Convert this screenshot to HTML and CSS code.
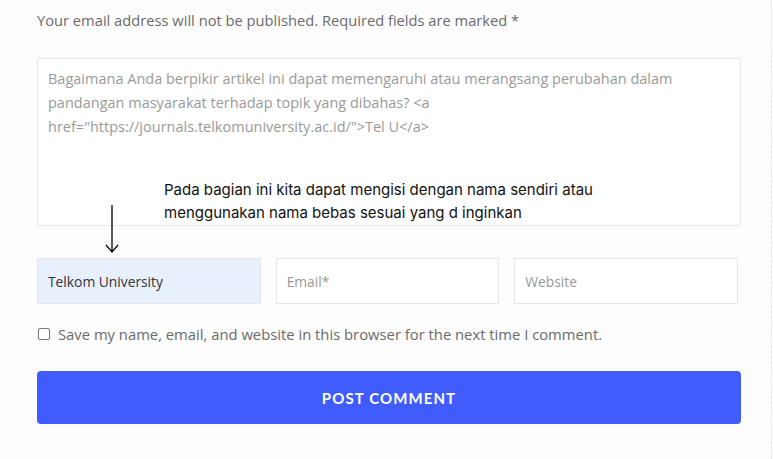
FILE: index.html
```html
<!DOCTYPE html>
<html lang="id">
<head>
<meta charset="utf-8">
<title>Tinggalkan Komentar</title>
<link rel="stylesheet" href="styles.css">
</head>
<body>
<div class="page">
  <form class="comment-form">
    <p class="notes">Your email address will not be published. Required fields are marked *</p>

    <div class="comment-field">
      <div class="textarea">Bagaimana Anda berpikir artikel ini dapat memengaruhi atau merangsang perubahan dalam pandangan masyarakat terhadap topik yang dibahas? &lt;a href="https://journals.telkomuniversity.ac.id/"&gt;Tel U&lt;/a&gt;</div>
      <p class="callout">Pada bagian ini kita dapat mengisi dengan nama sendiri atau menggunakan nama bebas sesuai yang d inginkan</p>
      <svg class="pointer" width="16" height="50" viewBox="0 0 16 50" aria-hidden="true">
        <path d="M8 1 V48 M2 41 L8 48 L14 41" fill="none" stroke="#111" stroke-width="1.4"/>
      </svg>
    </div>

    <div class="fields">
      <div class="input filled">Telkom University</div>
      <div class="input">Email*</div>
      <div class="input">Website</div>
    </div>

    <label class="consent">
      <span class="box"></span>
      <span>Save my name, email, and website in this browser for the next time I comment.</span>
    </label>

    <button type="button" class="submit">POST COMMENT</button>
  </form>
</div>
</body>
</html>
```

FILE: styles.css
```css
* {
  box-sizing: border-box;
}

html, body {
  margin: 0;
  padding: 0;
  background: #fdfdfd;
}

body {
  font-family: "Open Sans", "Lato", sans-serif;
  color: #666;
}

.page {
  width: 772px;
  height: 459px;
  border-right: 1px dashed #e6e6e6;
  padding: 10px 0 0 37px;
  overflow: hidden;
}

.comment-form {
  width: 704px;
}

.notes {
  margin: 0;
  font-size: 14.7px;
  line-height: 20px;
  color: #6b6b6b;
}

.comment-field {
  position: relative;
  margin-top: 28px;
}

.textarea {
  height: 168px;
  border: 1px solid #e6e6e6;
  border-radius: 3px;
  background: #fff;
  padding: 8px 30px 0 10px;
  font-size: 14.5px;
  line-height: 24px;
  color: #9a9a9a;
}

.callout {
  position: absolute;
  left: 127px;
  top: 120px;
  margin: 0;
  width: 450px;
  font-family: "Inter", sans-serif;
  font-size: 15px;
  line-height: 23px;
  color: #111;
}

.pointer {
  position: absolute;
  left: 67px;
  top: 146px;
}

.fields {
  display: flex;
  gap: 15px;
  margin-top: 32px;
  width: 701px;
}

.input {
  flex: 1;
  height: 46px;
  border: 1px solid #e6e6e6;
  background: #fff;
  display: flex;
  align-items: center;
  padding-left: 10px;
  font-size: 13.8px;
  color: #999;
}

.input.filled {
  background: #e8f0fd;
  color: #333;
}

.consent {
  display: flex;
  align-items: center;
  gap: 8px;
  margin-top: 20px;
  font-size: 14.8px;
  line-height: 20px;
  color: #6b6b6b;
}

.box {
  width: 12px;
  height: 12px;
  margin-left: 1px;
  border: 1px solid #777;
  border-radius: 2px;
  background: #fff;
}

.submit {
  display: block;
  width: 704px;
  height: 53px;
  margin-top: 27px;
  border: 0;
  border-radius: 4px;
  background: #405cff;
  color: #fff;
  font-family: "Lato", sans-serif;
  font-weight: 700;
  font-size: 15px;
  letter-spacing: 1.1px;
}
```
